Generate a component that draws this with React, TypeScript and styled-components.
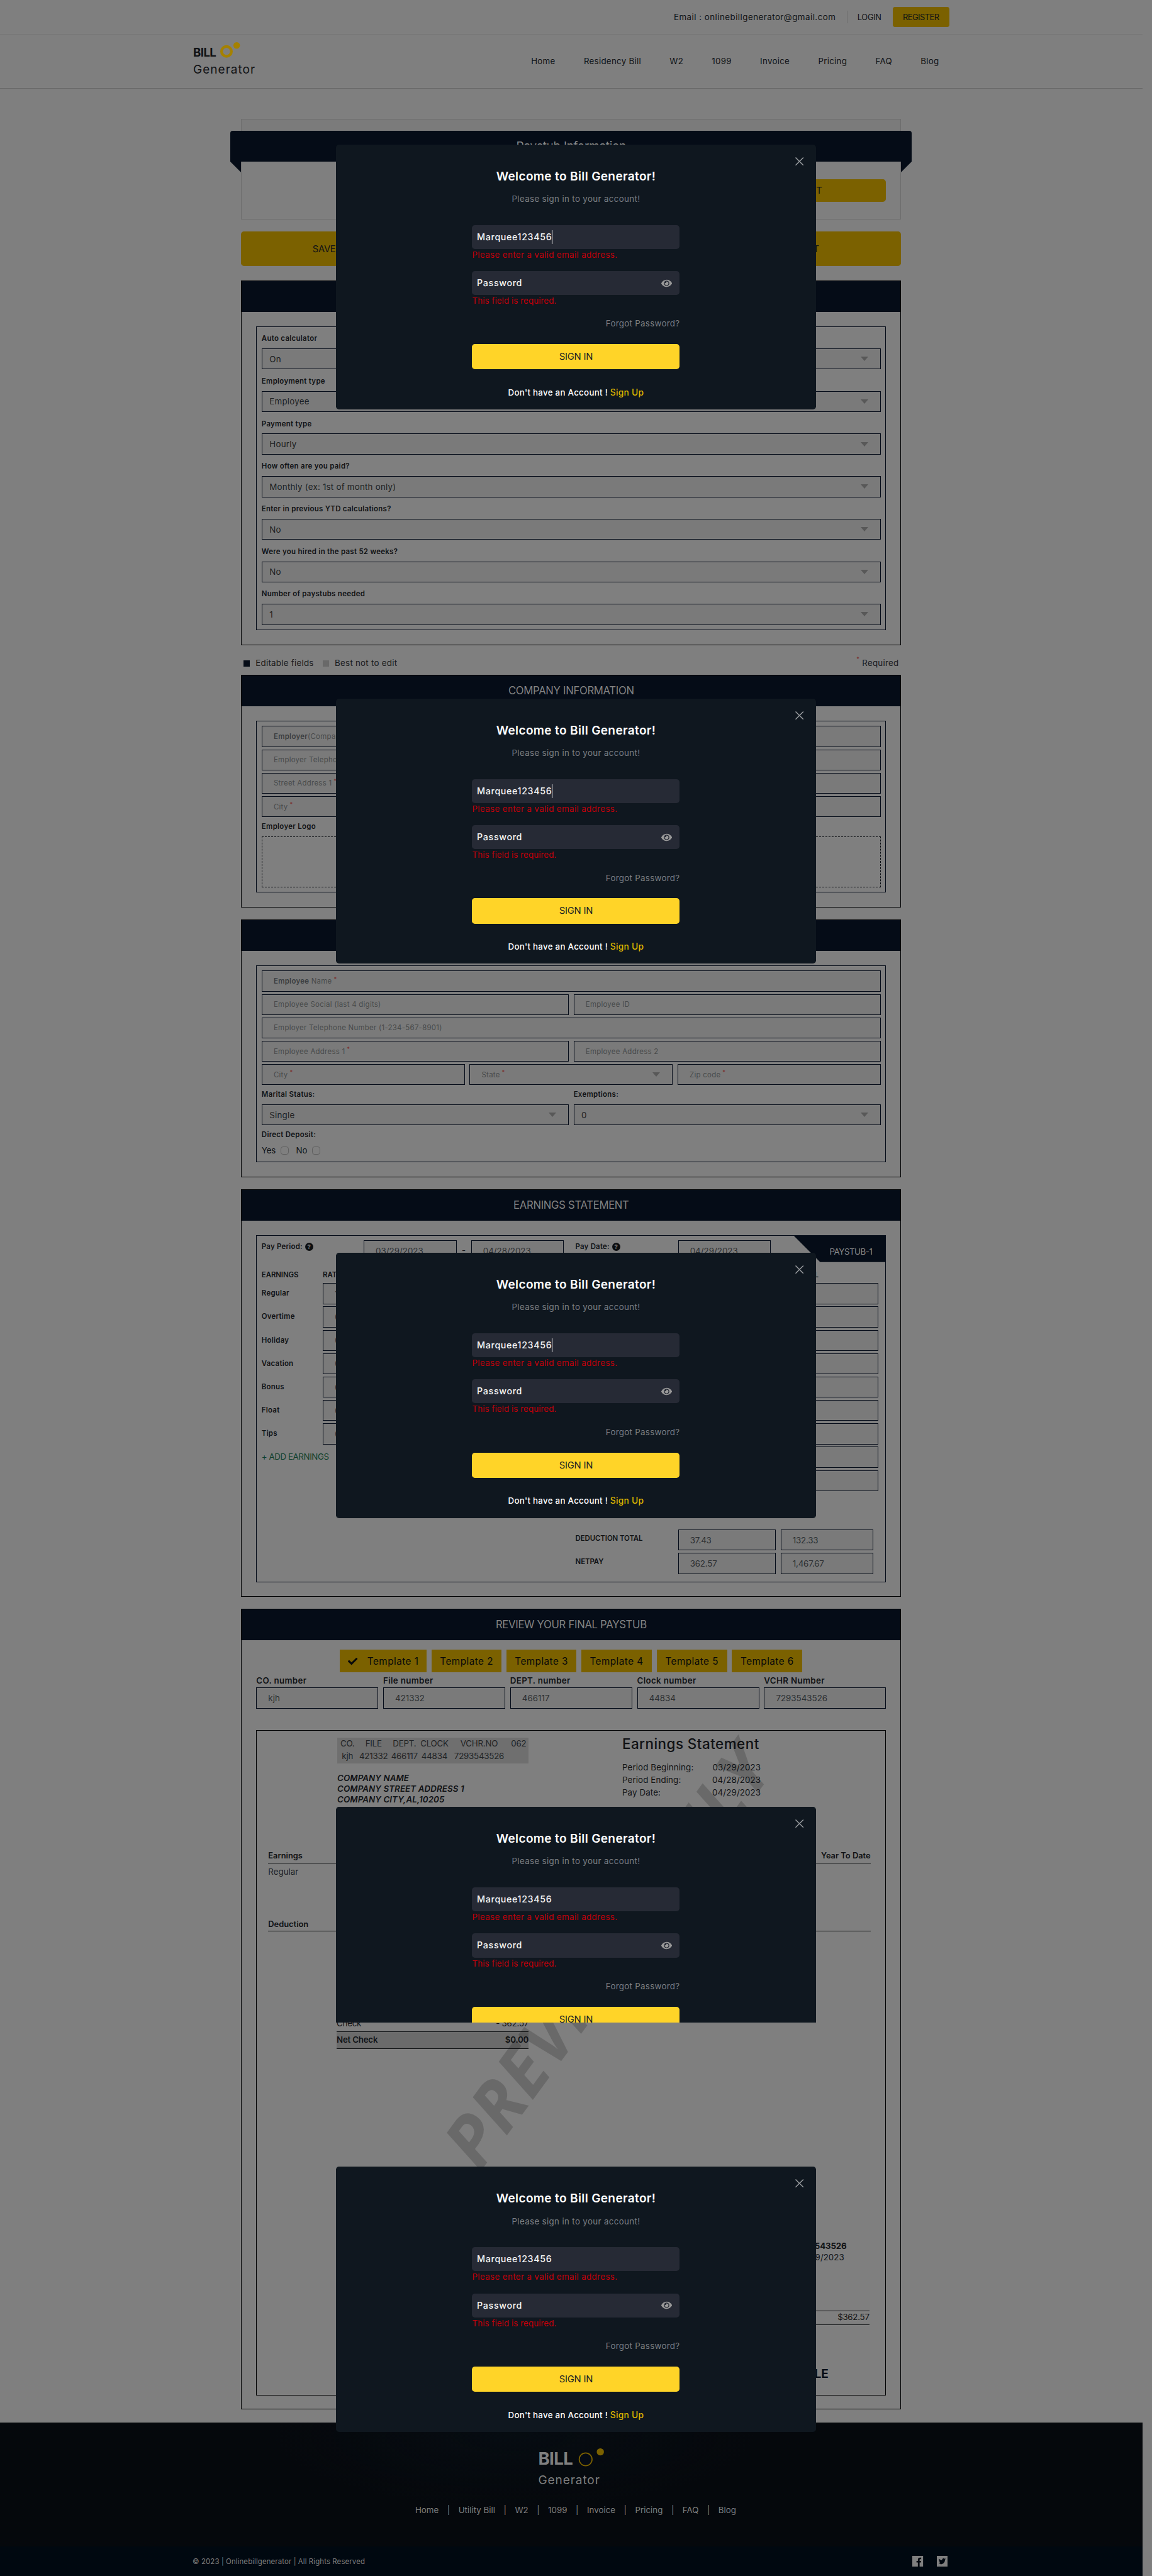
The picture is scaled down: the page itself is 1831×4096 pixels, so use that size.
import React from 'react';
import styled, { createGlobalStyle, css } from 'styled-components';
import { FaEye, FaCheck } from 'react-icons/fa';

const navy = '#050c17';
const paper = '#7f7f7f';
const field = '#7a7a7a';
const gold = '#7b6100';
const ink = '#101215';

const Global = createGlobalStyle`
  html, body { margin: 0; padding: 0; background: ${paper}; height: 4096px; overflow: hidden; }
  * { box-sizing: border-box; }
  body { font-family: Inter, "Open Sans", sans-serif; color: ${ink}; }
`;

const Page = styled.div`
  position: relative;
  zoom: 0.9536;
  width: 1920px;
  height: 4296px;
  overflow: hidden;
  background: ${paper};
  font-size: 14px;
  white-space: nowrap;
`;
const Screen = styled.div`
  width: 1904px;
  display: flex;
  flex-direction: column;
`;

/* ---------- header ---------- */
const TopBar = styled.div`
  height: 58px;
  padding-right: 322px;
  border-bottom: 1px solid #757575;
  display: flex;
  align-items: center;
  justify-content: flex-end;
`;
const Email = styled.span`
  width: 270px;
  margin-right: 18px;
  letter-spacing: 0.49px;
`;
const TopRule = styled.i`
  width: 1px;
  height: 21px;
  background: #6c6c6c;
  margin-right: 17px;
`;
const Login = styled.span`
  width: 59px;
  font-size: 13.5px;
  letter-spacing: -0.3px;
`;
const Register = styled.span`
  width: 94px;
  height: 33px;
  border-radius: 4px;
  background: ${gold};
  display: flex;
  align-items: center;
  justify-content: center;
  font-size: 13.5px;
  letter-spacing: -0.5px;
`;
const NavBar = styled.header`
  height: 90px;
  padding: 0 339px 0 322px;
  border-bottom: 1px solid #686868;
  display: flex;
  justify-content: space-between;
`;
const Brand = styled.div`
  padding-top: 11px;
`;
const BrandTop = styled.div`
  display: flex;
  height: 29px;
  align-items: flex-end;
`;
const BrandBill = styled.b`
  font-size: 19.5px;
  line-height: 20px;
  letter-spacing: -0.6px;
  width: 44px;
  height: 20.5px;
`;
const BrandSub = styled.div`
  font-size: 20px;
  line-height: 24px;
  letter-spacing: 1.03px;
  margin-top: 7px;
`;
const Nav = styled.nav`
  display: flex;
  gap: 47.5px;
  line-height: 90px;
  letter-spacing: 0.28px;
`;

/* ---------- shared ---------- */
const Main = styled.main`
  width: 1100px;
  margin: 0 auto;
  height: 3891px;
`;
const Intro = styled.section`
  margin-top: 50px;
  height: 168px;
  border: 1px solid #6d6d6d;
  padding-top: 19px;
  background: linear-gradient(#7b7b7b 20px, ${paper} 20px);
`;
const Ribbon = styled.div`
  position: relative;
  height: 51px;
  margin: 0 -19px;
  border-radius: 4px 4px 0 0;
  background: ${navy};
  color: #8b8b8b;
  font-size: 20px;
  letter-spacing: -0.34px;
  line-height: 53px;
  text-align: center;
  &::before, &::after {
    content: '';
    position: absolute;
    top: 51px;
    border-top: 18px solid ${navy};
  }
  &::before { left: 0; border-left: 18px solid transparent; }
  &::after { right: 0; border-right: 18px solid transparent; }
`;
const IntroActions = styled.div`
  margin: 30px 24px 0;
  display: flex;
  justify-content: flex-end;
`;
const GoldButton = styled.div<{ $w: number; $h: number; $pad?: number }>`
  width: ${p => p.$w}px;
  height: ${p => p.$h}px;
  border-radius: 5px;
  background: ${gold};
  display: flex;
  align-items: center;
  font-size: 15.5px;
  letter-spacing: -0.3px;
  ${p => (p.$pad ? css`padding-left: ${p.$pad}px;` : css`padding-right: 107px; justify-content: flex-end;`)}
`;
const SaveRow = styled.div`
  display: flex;
  gap: 16px;
  margin-top: 20px;
`;
const SaveButton = styled(GoldButton)<{ $end?: number }>`
  ${p => p.$end && css`padding-right: ${p.$end}px;`}
`;
const Box = styled.section<{ $h: number; $mt?: number }>`
  height: ${p => p.$h}px;
  margin-top: ${p => p.$mt ?? 20}px;
  border: 1px solid #020304;
  padding: 0 24px;
`;
const BoxTitle = styled.h2`
  margin: 0 -24px;
  height: 51px;
  line-height: 52px;
  background: ${navy};
  color: #828282;
  text-align: center;
  font-weight: 400;
  font-size: 17.5px;
  letter-spacing: -0.32px;
`;
const Inner = styled.div<{ $h: number; $pt: number }>`
  position: relative;
  margin-top: 24px;
  height: ${p => p.$h}px;
  border: 1px solid #050c19;
  padding: ${p => p.$pt}px 8px 0;
`;
const Label = styled.div<{ $mt?: number }>`
  font-size: 12px;
  font-weight: 600;
  line-height: 17px;
  height: 16px;
  letter-spacing: 0.3px;
  margin-top: ${p => p.$mt ?? 0}px;
`;
const SelectBox = styled.div`
  height: 35px;
  margin-top: 9px;
  border: 1px solid #050c19;
  background: ${field};
  display: flex;
  justify-content: space-between;
  align-items: center;
  padding: 0 20px 0 12px;
  letter-spacing: 0.23px;
  color: #1b1e22;
`;
const Caret = styled.i`
  border: 6.5px solid transparent;
  border-top: 8px solid #585858;
  border-bottom: 0;
`;
const Group = styled.div`
  height: 71px;
`;
const Row = styled.div<{ $cols?: string; $gap?: number }>`
  display: grid;
  grid-template-columns: ${p => p.$cols ?? '1fr'};
  column-gap: ${p => p.$gap ?? 8}px;
`;
const Stack = styled.div`
  display: flex;
  flex-direction: column;
  gap: 4px;
`;
const Input = styled.div`
  height: 35px;
  border: 1px solid #050c19;
  background: ${field};
  display: flex;
  align-items: center;
  padding: 0 20px 0 19px;
  font-size: 12px;
  letter-spacing: 0.28px;
  color: #484a4b;
  white-space: pre;
  b { font-weight: 600; color: #3b3e41; }
  ${Caret} { margin-left: auto; }
`;
const Star = styled.span`
  color: #7a2a2a;
  font-size: 10px;
  margin: -8px 0 0 3px;
`;
const Legend = styled.div`
  display: flex;
  height: 50px;
  padding: 22px 4px 0;
  line-height: 18px;
  letter-spacing: 0.26px;
  color: #17191c;
`;
const Swatch = styled.i<{ $c: string }>`
  width: 10px;
  height: 10px;
  margin: 4px 10px 0 0;
  background: ${p => p.$c};
`;
const LegendText = styled.span<{ $w: number }>`
  width: ${p => p.$w}px;
`;
const Required = styled.span`
  margin-left: auto;
  display: flex;
`;
const LogoDrop = styled.div`
  margin-top: 9px;
  height: 85px;
  border: 1px dashed #0a0d12;
`;
const Choices = styled.div`
  display: flex;
  align-items: center;
  margin-top: 10px;
  letter-spacing: -0.2px;
`;
const Check = styled.i`
  width: 14px;
  height: 14px;
  border: 1px solid #606060;
  border-radius: 4px;
  margin: 2px 12px 0 8px;
`;

/* ---------- earnings ---------- */
const Flag = styled.div`
  position: absolute;
  top: 0;
  right: 0;
  width: 153px;
  height: 44px;
  padding-right: 22px;
  background: ${navy};
  clip-path: polygon(0 0, 100% 0, 100% 100%, 44px 100%);
  color: #8a8a8a;
  line-height: 54px;
  text-align: right;
  letter-spacing: -0.5px;
`;
const DateRow = styled.div`
  display: grid;
  grid-template-columns: 170px 155px 24px 155px 19px 171px 155px;
  height: 49px;
`;
const Dash = styled.span`
  text-align: center;
  line-height: 35px;
`;
const PeriodLabel = styled.div`
  display: flex;
  height: 21px;
  align-items: center;
  gap: 4px;
  font-size: 12px;
  font-weight: 600;
  letter-spacing: 0.22px;
`;
const Help = styled.i`
  width: 14px;
  height: 14px;
  border-radius: 50%;
  background: #0c0e10;
  color: ${paper};
  font: 700 10px/14px Inter, sans-serif;
  text-align: center;
`;
const Value = styled(Input)`
  font-size: 14px;
  letter-spacing: 0;
  color: #2b2e31;
`;
const EarnHead = styled.div`
  display: grid;
  grid-template-columns: 102px 706px 120px;
  height: 22px;
  font-size: 12px;
  font-weight: 600;
  line-height: 18px;
  letter-spacing: -0.1px;
`;
const HeadRight = styled.span`
  text-align: right;
`;
const EarnBody = styled.div`
  display: grid;
  grid-template-columns: 102px 163px 600px 163px;
  height: 411px;
`;
const RowLabel = styled.div`
  height: 35px;
  line-height: 35px;
  font-size: 12px;
  font-weight: 600;
  letter-spacing: 0.25px;
`;
const AddLink = styled.div`
  line-height: 34px;
  color: #103f2c;
  letter-spacing: -0.46px;
`;
const Totals = styled.div`
  display: grid;
  grid-template-columns: 171px 163px 163px;
  row-gap: 4px;
  column-gap: 0;
  padding-left: 523px;
`;
const TotalLabel = styled(RowLabel)`
  line-height: 30px;
  letter-spacing: -0.1px;
`;
const TotalValue = styled(Value)<{ $ml?: number }>`
  margin-left: ${p => p.$ml ?? 0}px;
  letter-spacing: -0.2px;
`;

/* ---------- review ---------- */
const Templates = styled.div`
  display: flex;
  justify-content: center;
  gap: 8px;
  margin-top: 16px;
`;
const Template = styled.div<{ $w: number }>`
  width: ${p => p.$w}px;
  height: 38px;
  background: ${gold};
  display: flex;
  align-items: center;
  justify-content: center;
  gap: 16px;
  font-size: 16px;
  letter-spacing: 0.5px;
  color: #08090a;
`;
const NumLabel = styled.div`
  font-size: 14px;
  font-weight: 600;
  line-height: 20px;
  height: 24px;
  padding-top: 4px;
  margin-bottom: 1px;
  letter-spacing: 0.35px;
`;
const Preview = styled.div`
  position: relative;
  margin-top: 36px;
  height: 1109px;
  border: 1px solid #020304;
  padding: 12px 25px 0 19px;
`;
const Watermark = styled.div`
  position: absolute;
  left: 583px;
  top: 373px;
  width: 0;
  height: 0;
  display: flex;
  align-items: center;
  justify-content: center;
  font: italic 700 117px/117px "Open Sans", sans-serif;
  letter-spacing: 2px;
  color: rgba(0, 0, 0, 0.17);
  transform: rotate(-53.8deg);
`;
const StubTop = styled.div`
  display: flex;
  height: 185px;
  padding-left: 115px;
`;
const StubLeft = styled.div`
  width: 475px;
`;
const Codes = styled.div`
  width: 319px;
  height: 42px;
  background: #6f6f6f;
  display: grid;
  grid-template-columns: 34px 53px 50px 50px 99px 33px;
  line-height: 20.5px;
  text-align: center;
  letter-spacing: -0.25px;
  color: #222426;
`;
const Company = styled.address`
  margin-top: 16px;
  font-weight: 600;
  line-height: 17.9px;
  letter-spacing: 0.1px;
`;
const StubTitle = styled.div`
  font-size: 23.5px;
  font-weight: 500;
  line-height: 20px;
  letter-spacing: 0.5px;
  margin: -1px 0 19px;
`;
const StubLine = styled.div`
  display: flex;
  justify-content: space-between;
  width: 231px;
  line-height: 21px;
  letter-spacing: 0.12px;
`;
const StubHead = styled.div<{ $mt?: number }>`
  display: flex;
  justify-content: space-between;
  height: 24px;
  line-height: 24px;
  margin-top: ${p => p.$mt ?? 0}px;
  border-bottom: 2px solid #0b0d0f;
  font-size: 13.5px;
  font-weight: 600;
`;
const StubItem = styled.div`
  line-height: 28px;
  height: 28px;
  color: #1d2023;
`;
const Sums = styled.div`
  margin: 140px 0 0 114px;
  width: 320px;
`;
const SumRow = styled.div<{ $net?: boolean }>`
  display: flex;
  justify-content: space-between;
  line-height: 26px;
  height: 26px;
  letter-spacing: -0.25px;
  ${p => p.$net && css`
    height: 30px;
    background: #6b6b6b;
    border: solid #0b0d0f;
    border-width: 2px 0;
    font-weight: 600;
  `}
`;
const Voucher = styled.div`
  margin: 320px 40px 0 0;
  text-align: right;
  line-height: 18px;
  b { letter-spacing: -0.2px; }
`;
const VoucherDate = styled.div`
  padding-right: 4px;
  letter-spacing: 0;
`;
const VoucherAmount = styled.div`
  margin: 80px 2px 0 700px;
  height: 24px;
  border: solid #0b0d0f;
  border-width: 2px 0;
  line-height: 20px;
  text-align: right;
  letter-spacing: -0.3px;
`;
const NonNegotiable = styled.div`
  margin: 70px 70px 0 0;
  text-align: right;
  font-size: 20px;
  line-height: 24px;
  font-weight: 700;
  color: #070c15;
`;

/* ---------- footer ---------- */
const FooterTop = styled.footer`
  height: 207px;
  padding: 41px 0 0 1px;
  background:
    radial-gradient(400px 120px at 45% 10%, rgba(8, 18, 26, 0.4), transparent),
    #05080c;
  display: flex;
  flex-direction: column;
  color: #7f7f7f;
`;
const FootBrand = styled.div`
  margin-left: 896px;
`;
const FootBill = styled.b`
  font-size: 29px;
  line-height: 32px;
  width: 65px;
  letter-spacing: -0.6px;
`;
const FootBrandTop = styled.div`
  display: flex;
  height: 36px;
  align-items: flex-end;
`;
const FootBrandSub = styled.div`
  font-size: 20px;
  line-height: 24px;
  letter-spacing: 0.95px;
  margin-top: 8px;
`;
const FootLinks = styled.div`
  display: flex;
  width: 535px;
  margin: 28px 0 0 691px;
  justify-content: space-between;
  line-height: 20px;
`;
const FootBottom = styled.div`
  height: 50px;
  padding: 0 325px 0 321px;
  background: #000810;
  display: flex;
  align-items: center;
  justify-content: space-between;
  font-size: 12px;
  letter-spacing: 0.1px;
  color: #7f7f7f;
`;
const Socials = styled.div`
  display: flex;
  gap: 22px;
`;

/* ---------- modal ---------- */
const Modal = styled.div<{ $top: number; $h: number }>`
  position: absolute;
  left: 560px;
  top: ${p => p.$top}px;
  width: 800px;
  height: ${p => p.$h}px;
  overflow: hidden;
  border-radius: ${p => (p.$h < 442 ? '5px 5px 0 0' : '5px')};
  background: #0f171f;
  display: flex;
  flex-direction: column;
  align-items: center;
`;
const Close = styled.svg`
  position: absolute;
  right: 20px;
  top: 21px;
`;
const ModalTitle = styled.div`
  margin-top: 41px;
  flex: none;
  font-size: 20px;
  font-weight: 600;
  line-height: 26px;
  letter-spacing: 0.36px;
  color: #fff;
`;
const ModalSub = styled.div`
  margin-top: 14px;
  line-height: 20px;
  letter-spacing: 0.36px;
  color: #7c7f83;
`;
const Form = styled.div`
  width: 346px;
  margin-top: 33px;
  display: flex;
  flex-direction: column;
`;
const Entry = styled.div`
  height: 40px;
  flex: none;
  border-radius: 5px;
  background: #262a35;
  display: flex;
  align-items: center;
  justify-content: space-between;
  padding: 0 13px 0 8px;
  font-size: 15px;
  font-weight: 500;
  letter-spacing: 0.65px;
  color: #f4f4f4;
`;
const Typed = styled.span<{ $caret?: boolean }>`
  line-height: 23px;
  border-right: 1px solid ${p => (p.$caret ? '#fff' : 'transparent')};
`;
const ErrorText = styled.div<{ $tight?: boolean }>`
  height: 37px;
  line-height: 20px;
  letter-spacing: ${p => (p.$tight ? 0.08 : 0.38)}px;
  color: #c4000a;
`;
const Forgot = styled.div`
  line-height: 21px;
  height: 20px;
  text-align: right;
  letter-spacing: 0.3px;
  color: #7c7f83;
`;
const SignIn = styled.div`
  margin-top: 25px;
  height: 42px;
  border-radius: 5px;
  background: #ffd428;
  color: #1b1f24;
  font-size: 15.5px;
  line-height: 42px;
  letter-spacing: -0.2px;
  text-align: center;
`;
const SignUp = styled.div`
  margin-top: 28px;
  line-height: 22px;
  text-align: center;
  font-weight: 500;
  letter-spacing: 0.28px;
  color: #fff;
  span { color: #dcb400; font-size: 14.5px; }
`;

const Select = ({ label, value }: { label: string; value: string }) => (
  <Group>
    <Label>{label}</Label>
    <SelectBox>{value}<Caret /></SelectBox>
  </Group>
);

const Placeholder = ({ bold, text, req, caret }: { bold?: string; text: string; req?: boolean; caret?: boolean }) => (
  <Input>{bold && <b>{bold}</b>}{text}{req && <Star>*</Star>}{caret && <Caret />}</Input>
);

const LoginModal = ({ top, caret, height = 442 }: { top: number; caret?: boolean; height?: number }) => (
  <Modal $top={top} $h={height}>
    <Close width="14" height="14" viewBox="0 0 14 14" stroke="#9a9da0" strokeWidth="1.5"><path d="M0.5 0.5 13.5 13.5M13.5 0.5 0.5 13.5" /></Close>
    <ModalTitle>Welcome to Bill Generator!</ModalTitle>
    <ModalSub>Please sign in to your account!</ModalSub>
    <Form>
      <Entry><Typed $caret={caret}>Marquee123456</Typed></Entry>
      <ErrorText>Please enter a valid email address.</ErrorText>
      <Entry><Typed>Password</Typed><FaEye size={18} color="#999" /></Entry>
      <ErrorText $tight>This field is required.</ErrorText>
      <Forgot>Forgot Password?</Forgot>
      <SignIn>SIGN IN</SignIn>
      {height === 442 && <SignUp>Don't have an Account ! <span>Sign Up</span></SignUp>}
    </Form>
  </Modal>
);

const settings = [
  ['Auto calculator', 'On'],
  ['Employment type', 'Employee'],
  ['Payment type', 'Hourly'],
  ['How often are you paid?', 'Monthly (ex: 1st of month only)'],
  ['Enter in previous YTD calculations?', 'No'],
  ['Were you hired in the past 52 weeks?', 'No'],
  ['Number of paystubs needed', '1'],
];
const earnings = ['Regular', 'Overtime', 'Holiday', 'Vacation', 'Bonus', 'Float', 'Tips'];
const templateWidths = [145, 116.5, 117, 117.5, 117.5, 117.5];
const numbers = [['CO. number', 'kjh'], ['File number', '421332'], ['DEPT. number', '466117'], ['Clock number', '44834'], ['VCHR Number', '7293543526']];
const codes = ['CO.', 'FILE', 'DEPT.', 'CLOCK', 'VCHR.NO', '062', 'kjh', '421332', '466117', '44834', '7293543526'];
const links = ['Home', 'Utility Bill', 'W2', '1099', 'Invoice', 'Pricing', 'FAQ', 'Blog'];

export default function App() {
  return (
    <>
      <Global />
      <Page>
        <Screen>
          <TopBar>
            <Email>Email : onlinebillgenerator@gmail.com</Email>
            <TopRule />
            <Login>LOGIN</Login>
            <Register>REGISTER</Register>
          </TopBar>
          <NavBar>
            <Brand>
              <BrandTop>
                <BrandBill>BILL</BrandBill>
                <svg width="36" height="29" viewBox="0 0 36 29">
                  <circle cx="11.5" cy="16.5" r="8.2" fill="none" stroke="#a58100" strokeWidth="4.6" />
                  <circle cx="28.5" cy="6.5" r="5.5" fill="#a58100" />
                </svg>
              </BrandTop>
              <BrandSub>Generator</BrandSub>
            </Brand>
            <Nav>
              {['Home', 'Residency Bill', 'W2', '1099', 'Invoice', 'Pricing', 'FAQ', 'Blog'].map(n => <span key={n}>{n}</span>)}
            </Nav>
          </NavBar>

          <Main>
            <Intro>
              <Ribbon>Paystub Information</Ribbon>
              <IntroActions><GoldButton $w={400} $h={38}>SUBMIT</GoldButton></IntroActions>
            </Intro>
            <SaveRow>
              <SaveButton $w={542} $h={58} $pad={119}>SAVE</SaveButton>
              <SaveButton $w={542} $h={58} $end={137}>PRINT</SaveButton>
            </SaveRow>

            <Box $h={607.5} $mt={24}>
              <BoxTitle />
              <Inner $h={507} $pt={11}>
                {settings.map(([l, v]) => <Select key={l} label={l} value={v} />)}
              </Inner>
            </Box>

            <Legend>
              <Swatch $c={navy} /><LegendText $w={112}>Editable fields</LegendText>
              <Swatch $c="#696969" /><LegendText $w={110}>Best not to edit</LegendText>
              <Required><Star>*</Star>&nbsp;Required</Required>
            </Legend>

            <Box $h={388} $mt={0}>
              <BoxTitle>COMPANY INFORMATION</BoxTitle>
              <Inner $h={287} $pt={8}>
                <Stack>
                  <Placeholder bold="Employer" text="(Company) Name" req />
                  <Placeholder text="Employer Telephone Number" />
                  <Placeholder text="Street Address 1" req />
                  <Placeholder text="City" req />
                </Stack>
                <Label $mt={7}>Employer Logo</Label>
                <LogoDrop />
              </Inner>
            </Box>

            <Box $h={430}>
              <BoxTitle />
              <Inner $h={329} $pt={8}>
                <Stack>
                  <Placeholder bold="Employee" text=" Name" req />
                  <Row $cols="1fr 1fr">
                    <Placeholder text="Employee Social (last 4 digits)" />
                    <Placeholder text="Employee ID" />
                  </Row>
                  <Placeholder text="Employer Telephone Number (1-234-567-8901)" />
                  <Row $cols="1fr 1fr">
                    <Placeholder text="Employee Address 1" req />
                    <Placeholder text="Employee Address 2" />
                  </Row>
                  <Row $cols="1fr 1fr 1fr">
                    <Placeholder text="City" req />
                    <Placeholder text="State" req caret />
                    <Placeholder text="Zip code" req />
                  </Row>
                </Stack>
                <Row $cols="1fr 1fr">
                  <div><Label $mt={7}>Marital Status:</Label><SelectBox>Single<Caret /></SelectBox></div>
                  <div><Label $mt={7}>Exemptions:</Label><SelectBox>0<Caret /></SelectBox></div>
                </Row>
                <Label $mt={7}>Direct Deposit:</Label>
                <Choices>Yes<Check />No<Check /></Choices>
              </Inner>
            </Box>

            <Box $h={679.5}>
              <BoxTitle>EARNINGS STATEMENT</BoxTitle>
              <Inner $h={579} $pt={8}>
                <Flag>PAYSTUB-1</Flag>
                <DateRow>
                  <PeriodLabel>Pay Period: <Help>?</Help></PeriodLabel>
                  <Value>03/29/2023</Value>
                  <Dash>-</Dash>
                  <Value>04/28/2023</Value>
                  <span />
                  <PeriodLabel>Pay Date: <Help>?</Help></PeriodLabel>
                  <Value>04/29/2023</Value>
                </DateRow>
                <EarnHead><span>EARNINGS</span><span>RATE</span><HeadRight>TOTAL</HeadRight></EarnHead>
                <EarnBody>
                  <Stack>
                    {earnings.map(e => <RowLabel key={e}>{e}</RowLabel>)}
                    <AddLink>+ ADD EARNINGS</AddLink>
                  </Stack>
                  <Stack>{earnings.map((e, i) => <Value key={e}>{i ? '0' : '10'}</Value>)}</Stack>
                  <span />
                  <Stack>{Array.from({ length: 9 }, (_, i) => <Value key={i} />)}</Stack>
                </EarnBody>
                <Totals>
                  <TotalLabel>DEDUCTION TOTAL</TotalLabel><TotalValue>37.43</TotalValue><TotalValue $ml={8}>132.33</TotalValue>
                  <TotalLabel>NETPAY</TotalLabel><TotalValue>362.57</TotalValue><TotalValue $ml={8}>1,467.67</TotalValue>
                </Totals>
              </Inner>
            </Box>

            <Box $h={1335}>
              <BoxTitle>REVIEW YOUR FINAL PAYSTUB</BoxTitle>
              <Templates>
                {templateWidths.map((w, i) => (
                  <Template key={i} $w={w}>{i === 0 && <FaCheck size={16} />}Template {i + 1}</Template>
                ))}
              </Templates>
              <Row $cols="repeat(5, 1fr)">
                {numbers.map(([l, v]) => <div key={l}><NumLabel>{l}</NumLabel><Value>{v}</Value></div>)}
              </Row>
              <Preview>
                <StubTop>
                  <StubLeft>
                    <Codes>{codes.map(c => <span key={c}>{c}</span>)}</Codes>
                    <Company>COMPANY NAME<br />COMPANY STREET ADDRESS 1<br />COMPANY CITY,AL,10205</Company>
                  </StubLeft>
                  <div>
                    <StubTitle>Earnings Statement</StubTitle>
                    <StubLine><span>Period Beginning:</span><span>03/29/2023</span></StubLine>
                    <StubLine><span>Period Ending:</span><span>04/28/2023</span></StubLine>
                    <StubLine><span>Pay Date:</span><span>04/29/2023</span></StubLine>
                  </div>
                </StubTop>
                <StubHead><span>Earnings</span><span>Year To Date</span></StubHead>
                <StubItem>Regular</StubItem>
                <StubHead $mt={62}><span>Deduction</span></StubHead>
                <Sums>
                  <SumRow><span>Check</span><span>- 362.57</span></SumRow>
                  <SumRow $net><span>Net Check</span><span>$0.00</span></SumRow>
                </Sums>
                <Voucher><b>7293543526</b><VoucherDate>04/29/2023</VoucherDate></Voucher>
                <VoucherAmount>$362.57</VoucherAmount>
                <NonNegotiable>NON-NEGOTIABLE</NonNegotiable>
                <Watermark>PREVIEW ONLY</Watermark>
              </Preview>
            </Box>
          </Main>

          <FooterTop>
            <FootBrand>
              <FootBrandTop>
                <FootBill>BILL</FootBill>
                <svg width="50" height="36" viewBox="0 0 50 36">
                  <circle cx="14.5" cy="20.500" r="10.7" fill="#040a14" stroke="#7b6100" strokeWidth="1.8" />
                  <circle cx="39" cy="8" r="6" fill="#7b6100" />
                </svg>
              </FootBrandTop>
              <FootBrandSub>Generator</FootBrandSub>
            </FootBrand>
            <FootLinks>
              {links.map((l, i) => <React.Fragment key={l}>{i > 0 && <span>|</span>}<span>{l}</span></React.Fragment>)}
            </FootLinks>
          </FooterTop>
          <FootBottom>
            <span>© 2023 | Onlinebillgenerator | All Rights Reserved</span>
            <Socials>
              <svg width="18" height="18" viewBox="0 0 18 18">
                <rect width="18" height="18" fill="#7f7f7f" />
                <path d="M9.3 18V11H7V8.3h2.3V6.4C9.3 4 10.7 2.8 12.8 2.8h2V5.4h-1.300c-1.100 0-1.300.5-1.300 1.300v1.600h2.600L14.400 11h-2.200v7z" fill="#000810" />
              </svg>
              <svg width="18" height="18" viewBox="0 0 18 18">
                <rect width="18" height="18" fill="#7f7f7f" />
                <path d="M15 5.300c-.4.200-.9.300-1.400.4.500-.3.900-.8 1.100-1.400-.5.300-1 .5-1.600.6A2.460 2.460 0 0 0 8.900 7.200C6.800 7.100 5 6.100 3.800 4.600c-.7 1.100-.3 2.600.8 3.300-.4 0-.8-.1-1.100-.3 0 1.200.8 2.200 2 2.500-.4.100-.7.100-1.100 0 .3 1 1.200 1.700 2.300 1.700-1 .8-2.300 1.200-3.700 1.100 4.600 2.800 10.300-.1 10.600-5.800v-.6c.5-.3.900-.8 1.400-1.200z" fill="#000810" />
              </svg>
            </Socials>
          </FootBottom>
        </Screen>

        <LoginModal top={241} caret />
        <LoginModal top={1165} caret />
        <LoginModal top={2089} caret />
        <LoginModal top={3013} height={359} />
        <LoginModal top={3613} />
      </Page>
    </>
  );
}
